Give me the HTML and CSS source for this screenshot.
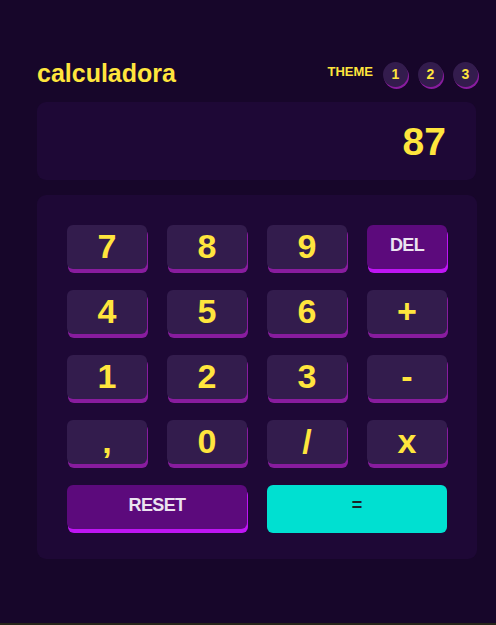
FILE: index.html
```html
<!DOCTYPE html>
<html lang="es">
<head>
<meta charset="utf-8">
<title>calculadora</title>
<link rel="stylesheet" href="styles.css">
</head>
<body>
<main class="calc">
  <header class="top">
    <h1 class="title">calculadora</h1>
    <div class="theme">
      <span class="theme-label">THEME</span>
      <div class="theme-dots">
        <span class="dot">1</span>
        <span class="dot">2</span>
        <span class="dot">3</span>
      </div>
    </div>
  </header>
  <section class="screen"><span class="value">87</span></section>
  <section class="keypad">
    <button class="key">7</button>
    <button class="key">8</button>
    <button class="key">9</button>
    <button class="key key-alt">DEL</button>
    <button class="key">4</button>
    <button class="key">5</button>
    <button class="key">6</button>
    <button class="key">+</button>
    <button class="key">1</button>
    <button class="key">2</button>
    <button class="key">3</button>
    <button class="key">-</button>
    <button class="key">,</button>
    <button class="key">0</button>
    <button class="key">/</button>
    <button class="key">x</button>
    <button class="key key-alt key-wide">RESET</button>
    <button class="key key-eq key-wide">=</button>
  </section>
</main>
</body>
</html>
```
FILE: styles.css
```css
html {
  background: #26251a;
}
body {
  margin: 0;
  height: 623px;
  background: #17062a;
  font-family: "Liberation Sans", Arial, sans-serif;
  font-weight: 700;
}
.calc {
  width: 440px;
  margin-left: 37px;
  padding-top: 58px;
}
.top {
  display: flex;
  align-items: center;
  justify-content: space-between;
  height: 32px;
}
.title {
  margin: 0;
  font-size: 25px;
  color: #ffe53d;
  line-height: 32px;
  margin-top: -2px;
}
.theme {
  display: flex;
  align-items: center;
  gap: 10px;
  margin-right: -1px;
}
.theme-label {
  font-size: 13px;
  color: #ffe53d;
  margin-top: -6px;
}
.theme-dots {
  display: flex;
  gap: 10px;
}
.dot {
  width: 25px;
  height: 25px;
  border-radius: 50%;
  background: #331c4d;
  box-shadow: 1px 2px 0 #881c9e;
  color: #ffe53d;
  font-size: 14px;
  display: flex;
  align-items: center;
  justify-content: center;
}
.screen {
  margin-top: 12px;
  height: 78px;
  width: 439px;
  background: #1e0836;
  border-radius: 9px;
  display: flex;
  align-items: center;
  justify-content: flex-end;
  padding-right: 30px;
  box-sizing: border-box;
}
.value {
  font-size: 39px;
  color: #ffe53d;
  margin-top: 2px;
}
.keypad {
  margin-top: 15px;
  background: #1e0836;
  border-radius: 9px;
  padding: 30px;
  display: grid;
  grid-template-columns: repeat(4, 80px);
  grid-auto-rows: 44px;
  column-gap: 20px;
  row-gap: 21px;
}
.key {
  border: 0;
  border-radius: 6px;
  background: #331c4d;
  box-shadow: 1px 4px 0 #881c9e;
  color: #ffe53d;
  font-family: inherit;
  font-weight: 700;
  font-size: 34px;
  padding: 0 0 3px;
  line-height: 1;
}
.key-alt {
  background: #5c0a7c;
  box-shadow: 1px 4px 0 #be15f4;
  color: #ebe3f0;
  font-size: 18px;
  letter-spacing: -0.6px;
  padding: 0 0 4px;
}
.key-wide {
  grid-column: span 2;
}
.key-eq {
  background: #00e0d1;
  box-shadow: 0 4px 0 #00e0d1;
  color: #1a2327;
  font-size: 18px;
  padding: 0 0 4px;
}
```
